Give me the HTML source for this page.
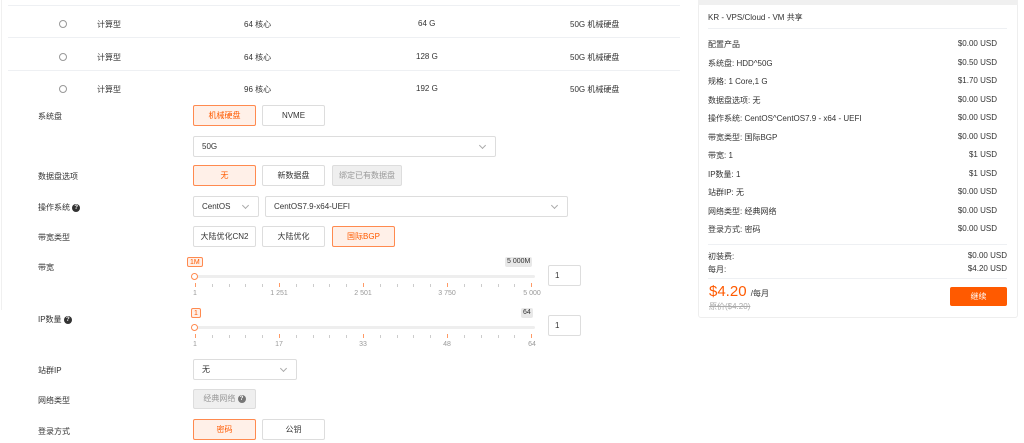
<!DOCTYPE html><html><head><meta charset="utf-8"><style>
*{margin:0;padding:0;box-sizing:border-box}
body{width:1024px;height:443px;background:#fff;font-family:"Liberation Sans","Noto Sans CJK SC",sans-serif;font-size:8px;color:#333;position:relative;overflow:hidden}
.a{position:absolute;white-space:nowrap}
.ln{position:absolute;height:1px;background:#eef0f3}
.rd{position:absolute;width:8px;height:8px;border:1px solid #999;border-radius:50%}
.btn{position:absolute;height:21px;border:1px solid #ddd;border-radius:2px;text-align:center;line-height:19px;font-size:8px;color:#333;background:#fff}
.on{border-color:#ff8a4f;background:#fff0e8;color:#ff5a00}
.dis{background:#efefef;color:#999;border-color:#ddd}
.sel{position:absolute;height:21px;border:1px solid #ddd;border-radius:2px;line-height:19px;padding-left:8px;font-size:8px}
.sel:after{content:"";position:absolute;right:10px;top:6px;width:4px;height:4px;border-right:1px solid #aaa;border-bottom:1px solid #aaa;transform:rotate(45deg)}
.tag{position:absolute;height:10px;font-size:7px;line-height:9px;padding:0 2px;border-radius:2px}
.tk{position:absolute;width:1px;height:3px;background:#ccc}
.tk.m{background:#ff9a66;height:4px}
.tl{position:absolute;font-size:7px;color:#999;transform:translateX(-50%)}
.q{display:inline-block;width:8px;height:8px;border-radius:50%;background:#333;color:#fff;font-size:6px;line-height:8px;text-align:center;vertical-align:middle;font-weight:bold}
.r{position:absolute;left:708px;width:289px;font-size:8px}
.r span{float:right}
</style></head><body>
<div class="a" style="left:1px;top:0;width:1px;height:310px;background:#f0f0f0"></div>
<div class="ln" style="left:8px;top:5px;width:672px"></div>
<div class="ln" style="left:8px;top:37px;width:672px"></div>
<div class="ln" style="left:8px;top:70px;width:672px"></div>
<div class="rd" style="left:59px;top:20px"></div>
<div class="rd" style="left:59px;top:53px"></div>
<div class="rd" style="left:59px;top:85px"></div>
<div class="a" style="left:97px;top:19px">计算型</div><div class="a" style="left:244px;top:19px">64 核心</div><div class="a" style="left:418px;top:19px">64 G</div><div class="a" style="left:570px;top:19px">50G 机械硬盘</div>
<div class="a" style="left:97px;top:52px">计算型</div><div class="a" style="left:244px;top:52px">64 核心</div><div class="a" style="left:416px;top:52px">128 G</div><div class="a" style="left:570px;top:52px">50G 机械硬盘</div>
<div class="a" style="left:97px;top:84px">计算型</div><div class="a" style="left:244px;top:84px">96 核心</div><div class="a" style="left:416px;top:84px">192 G</div><div class="a" style="left:570px;top:84px">50G 机械硬盘</div>

<div class="a" style="left:38px;top:111px">系统盘</div>
<div class="btn on" style="left:193px;top:105px;width:63px">机械硬盘</div>
<div class="btn" style="left:262px;top:105px;width:63px">NVME</div>
<div class="sel" style="left:193px;top:136px;width:303px">50G</div>

<div class="a" style="left:38px;top:171px">数据盘选项</div>
<div class="btn on" style="left:193px;top:165px;width:63px">无</div>
<div class="btn" style="left:262px;top:165px;width:63px">新数据盘</div>
<div class="btn dis" style="left:332px;top:165px;width:70px">绑定已有数据盘</div>

<div class="a" style="left:38px;top:202px">操作系统 <span class="q">?</span></div>
<div class="sel" style="left:193px;top:196px;width:66px">CentOS</div>
<div class="sel" style="left:265px;top:196px;width:303px">CentOS7.9-x64-UEFI</div>

<div class="a" style="left:38px;top:232px">带宽类型</div>
<div class="btn" style="left:193px;top:226px;width:63px">大陆优化CN2</div>
<div class="btn" style="left:262px;top:226px;width:63px">大陆优化</div>
<div class="btn on" style="left:332px;top:226px;width:63px">国际BGP</div>

<div class="a" style="left:38px;top:262px">带宽</div>
<div class="tag" style="left:187px;top:257px;border:1px solid #ff8a4f;background:#fff0e8;color:#ff5a00">1M</div>
<div class="tag" style="left:505px;top:257px;background:#e8e8e8;color:#333">5 000M</div>
<div class="a" style="left:195px;top:275px;width:340px;height:3px;background:#eee;border-radius:2px"></div>
<div class="a" style="left:191px;top:273px;width:7px;height:7px;border:1.5px solid #ff8a4f;border-radius:50%;background:#fff"></div>
<div id="t1"></div>
<div class="tl" style="left:195px;top:290px">1</div><div class="tl" style="left:279px;top:290px">1 251</div><div class="tl" style="left:363px;top:290px">2 501</div><div class="tl" style="left:447px;top:290px">3 750</div><div class="tl" style="left:532px;top:290px">5 000</div>
<div class="btn" style="left:548px;top:265px;width:33px;text-align:left;padding-left:6px">1</div>

<div class="a" style="left:38px;top:314px">IP数量 <span class="q">?</span></div>
<div class="tag" style="left:191px;top:308px;border:1px solid #ff8a4f;background:#fff0e8;color:#ff5a00">1</div>
<div class="tag" style="left:521px;top:308px;background:#e8e8e8;color:#333">64</div>
<div class="a" style="left:195px;top:326px;width:340px;height:3px;background:#eee;border-radius:2px"></div>
<div class="a" style="left:191px;top:324px;width:7px;height:7px;border:1.5px solid #ff8a4f;border-radius:50%;background:#fff"></div>
<div class="tl" style="left:195px;top:341px">1</div><div class="tl" style="left:279px;top:341px">17</div><div class="tl" style="left:363px;top:341px">33</div><div class="tl" style="left:447px;top:341px">48</div><div class="tl" style="left:532px;top:341px">64</div>
<div class="btn" style="left:548px;top:315px;width:33px;text-align:left;padding-left:6px">1</div>

<div class="tk m" style="left:195px;top:283px"></div><div class="tk" style="left:212px;top:284px"></div><div class="tk" style="left:229px;top:284px"></div><div class="tk" style="left:245px;top:284px"></div><div class="tk" style="left:262px;top:284px"></div><div class="tk m" style="left:279px;top:283px"></div><div class="tk" style="left:296px;top:284px"></div><div class="tk" style="left:313px;top:284px"></div><div class="tk" style="left:329px;top:284px"></div><div class="tk" style="left:346px;top:284px"></div><div class="tk m" style="left:363px;top:283px"></div><div class="tk" style="left:380px;top:284px"></div><div class="tk" style="left:397px;top:284px"></div><div class="tk" style="left:413px;top:284px"></div><div class="tk" style="left:430px;top:284px"></div><div class="tk m" style="left:447px;top:283px"></div><div class="tk" style="left:464px;top:284px"></div><div class="tk" style="left:481px;top:284px"></div><div class="tk" style="left:498px;top:284px"></div><div class="tk" style="left:514px;top:284px"></div><div class="tk m" style="left:531px;top:283px"></div>
<div class="tk m" style="left:195px;top:334px"></div><div class="tk" style="left:212px;top:335px"></div><div class="tk" style="left:229px;top:335px"></div><div class="tk" style="left:245px;top:335px"></div><div class="tk" style="left:262px;top:335px"></div><div class="tk m" style="left:279px;top:334px"></div><div class="tk" style="left:296px;top:335px"></div><div class="tk" style="left:313px;top:335px"></div><div class="tk" style="left:329px;top:335px"></div><div class="tk" style="left:346px;top:335px"></div><div class="tk m" style="left:363px;top:334px"></div><div class="tk" style="left:380px;top:335px"></div><div class="tk" style="left:397px;top:335px"></div><div class="tk" style="left:413px;top:335px"></div><div class="tk" style="left:430px;top:335px"></div><div class="tk m" style="left:447px;top:334px"></div><div class="tk" style="left:464px;top:335px"></div><div class="tk" style="left:481px;top:335px"></div><div class="tk" style="left:498px;top:335px"></div><div class="tk" style="left:514px;top:335px"></div><div class="tk m" style="left:531px;top:334px"></div>

<div class="a" style="left:38px;top:365px">站群IP</div>
<div class="sel" style="left:193px;top:359px;width:104px">无</div>
<div class="a" style="left:38px;top:395px">网络类型</div>
<div class="btn dis" style="left:193px;top:389px;width:63px;height:20px;line-height:18px">经典网络 <span class="q" style="background:#777">?</span></div>
<div class="a" style="left:38px;top:426px">登录方式</div>
<div class="btn on" style="left:193px;top:419px;width:63px">密码</div>
<div class="btn" style="left:262px;top:419px;width:63px">公钥</div>

<div class="a" style="left:698px;top:0;width:320px;height:318px;border:1px solid #eee;border-radius:3px;background:#fff"></div>
<div class="a" style="left:698px;top:0;width:320px;height:5px;background:#f0f0f0"></div>
<div class="a" style="left:708px;top:12px;font-size:8px">KR - VPS/Cloud - VM 共享</div>
<div class="ln" style="left:708px;top:28px;width:299px"></div>
<div class="r" style="top:39px">配置产品<span>$0.00 USD</span></div>
<div class="r" style="top:57.5px">系统盘: HDD^50G<span>$0.50 USD</span></div>
<div class="r" style="top:76px">规格: 1 Core,1 G<span>$1.70 USD</span></div>
<div class="r" style="top:94.5px">数据盘选项: 无<span>$0.00 USD</span></div>
<div class="r" style="top:113px">操作系统: CentOS^CentOS7.9 - x64 - UEFI<span>$0.00 USD</span></div>
<div class="r" style="top:131.5px">带宽类型: 国际BGP<span>$0.00 USD</span></div>
<div class="r" style="top:150px">带宽: 1<span>$1 USD</span></div>
<div class="r" style="top:168.5px">IP数量: 1<span>$1 USD</span></div>
<div class="r" style="top:187px">站群IP: 无<span>$0.00 USD</span></div>
<div class="r" style="top:205.5px">网络类型: 经典网络<span>$0.00 USD</span></div>
<div class="r" style="top:224px">登录方式: 密码<span>$0.00 USD</span></div>
<div class="ln" style="left:708px;top:244px;width:299px"></div>
<div class="r" style="top:251px;width:299px">初装费:<span>$0.00 USD</span></div>
<div class="r" style="top:264px;width:299px">每月:<span>$4.20 USD</span></div>
<div class="ln" style="left:708px;top:278px;width:299px"></div>
<div class="a" style="left:709px;top:283px;color:#ff5a00;font-size:15px">$4.20 <span style="color:#333;font-size:8px">/每月</span></div>
<div class="a" style="left:709px;top:301px;color:#aaa;font-size:8px;text-decoration:line-through">原价($4.20)</div>
<div class="a" style="left:950px;top:287px;width:57px;height:19px;background:#ff5a00;border-radius:2px;color:#fff;text-align:center;line-height:19px;font-size:8px">继续</div>
</body></html>
